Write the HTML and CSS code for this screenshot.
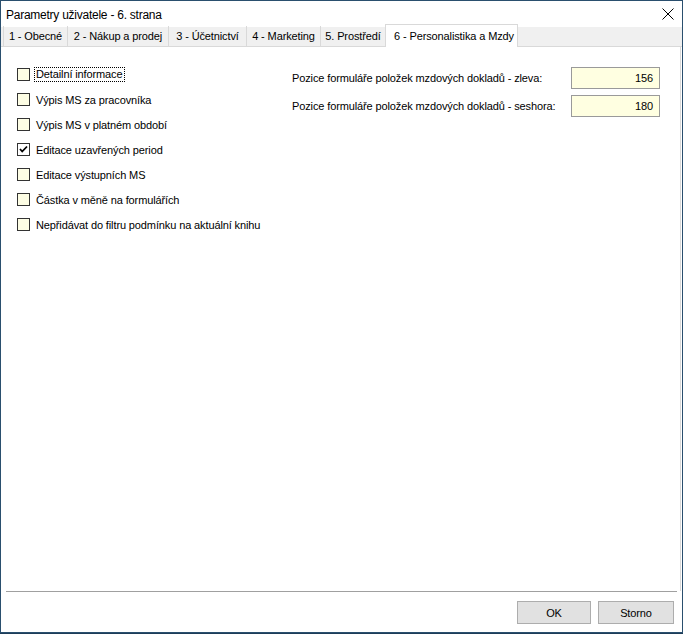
FILE: index.html
```html
<!DOCTYPE html>
<html lang="cs">
<head>
<meta charset="utf-8">
<title>Parametry uživatele - 6. strana</title>
<link rel="stylesheet" href="styles.css">
</head>
<body>
<div class="window">
  <div class="titlebar">
    <span class="title">Parametry uživatele - 6. strana</span>
    <span class="close">
      <svg width="12" height="12" viewBox="0 0 12 12"><path d="M0.5 0.5 L11.5 11.5 M11.5 0.5 L0.5 11.5" stroke="#000" stroke-width="1" fill="none"/></svg>
    </span>
  </div>
  <div class="tabs">
    <div class="tab t1">1 - Obecné</div>
    <div class="tab t2">2 - Nákup a prodej</div>
    <div class="tab t3">3 - Účetnictví</div>
    <div class="tab t4">4 - Marketing</div>
    <div class="tab t5">5. Prostředí</div>
    <div class="tab active">6 - Personalistika a Mzdy</div>
  </div>
  <div class="page">
    <div class="col-left">
      <label class="check"><span class="box"></span><span class="focus">Detailní informace</span></label>
      <label class="check"><span class="box"></span><span>Výpis MS za pracovníka</span></label>
      <label class="check"><span class="box"></span><span>Výpis MS v platném období</span></label>
      <label class="check"><span class="box checked"><svg width="11" height="11" viewBox="0 0 11 11"><path d="M2 5 L4.2 7.5 L9 2.5" stroke="#000" stroke-width="1.8" fill="none"/></svg></span><span>Editace uzavřených period</span></label>
      <label class="check"><span class="box"></span><span>Editace výstupních MS</span></label>
      <label class="check"><span class="box"></span><span>Částka v měně na formulářích</span></label>
      <label class="check"><span class="box"></span><span>Nepřidávat do filtru podmínku na aktuální knihu</span></label>
    </div>
    <div class="col-right">
      <div class="field"><span class="flabel">Pozice formuláře položek mzdových dokladů - zleva:</span><span class="input">156</span></div>
      <div class="field"><span class="flabel">Pozice formuláře položek mzdových dokladů - seshora:</span><span class="input">180</span></div>
    </div>
  </div>
  <div class="footer">
    <div class="sep"></div>
    <div class="buttons">
      <div class="btn">OK</div>
      <div class="btn">Storno</div>
    </div>
  </div>
</div>
</body>
</html>
```
FILE: styles.css
```css
* { box-sizing: border-box; }
html, body { margin: 0; padding: 0; }
body {
  background: #1d3d58;
  width: 683px;
  height: 634px;
  overflow: hidden;
  font-family: "Liberation Sans", Arial, sans-serif;
  font-size: 11px;
  letter-spacing: -0.12px;
  color: #000;
}
.window {
  width: 683px;
  height: 633px;
  border: 1px solid #2a4f6e;
  background: #fff;
  display: flex;
  flex-direction: column;
}
.titlebar {
  height: 26px;
  display: flex;
  align-items: center;
  justify-content: space-between;
  padding-left: 5px;
  padding-right: 8px;
  font-size: 12px;
  letter-spacing: -0.25px;
}
.title { padding-top: 1px; }
.close { display: flex; width: 12px; height: 12px; }
.tabs {
  height: 20px;
  background: #f0f0f0;
  display: flex;
  align-items: flex-end;
  padding-left: 2px;
  border-bottom: 1px solid #d9d9d9;
  position: relative;
}
.tab {
  height: 20px;
  display: flex;
  align-items: center;
  justify-content: center;
  border-left: 1px solid #d9d9d9;
  white-space: nowrap;
  flex: none;
}
.t1 { width: 64px; }
.t2 { width: 101px; }
.t3 { width: 78px; }
.t4 { width: 74px; }
.t5 { width: 65px; }
.tab.active {
  position: relative;
  background: #fff;
  width: 133px;
  height: 23px;
  margin-bottom: -1px;
  border: 1px solid #d9d9d9;
  border-bottom: none;
  padding: 0 0 1px 5px;
}
.page {
  flex: 1;
  border-right: 1px solid #d9d9d9;
  margin-right: 1px;
  display: flex;
  padding: 15px 0 0 16px;
}
.col-left {
  width: 275px;
  display: flex;
  flex-direction: column;
}
.check {
  height: 25px;
  display: flex;
  align-items: center;
  gap: 6px;
  white-space: nowrap;
}
.box {
  width: 13px;
  height: 13px;
  border: 1px solid #333;
  background: #fdfde4;
  display: flex;
  align-items: center;
  justify-content: center;
  flex: none;
}
.box.checked { background: #fff; }
.focus {
  outline: 1px dotted #000;
  outline-offset: 0;
  padding: 0 1px;
  margin-left: -1px;
  line-height: 13px;
}
.col-right {
  display: flex;
  flex-direction: column;
  gap: 6px;
  padding-top: 5px;
}
.field {
  display: flex;
  align-items: center;
  height: 22px;
}
.flabel { width: 279px; white-space: nowrap; }
.input {
  width: 89px;
  height: 22px;
  border: 1px solid #9a9a9a;
  background: #ffffe1;
  display: flex;
  align-items: center;
  justify-content: flex-end;
  padding-right: 6px;
}
.footer {
  height: 41px;
  display: flex;
  flex-direction: column;
}
.sep {
  height: 1px;
  background: #a0a0a0;
  margin: 0 5px;
}
.buttons {
  display: flex;
  justify-content: flex-end;
  gap: 7px;
  padding: 9px 8px 0 0;
}
.btn {
  width: 74px;
  height: 23px;
  border: 1px solid #adadad;
  background: #e1e1e1;
  display: flex;
  align-items: center;
  justify-content: center;
}
.btn:last-child { width: 76px; }
```
